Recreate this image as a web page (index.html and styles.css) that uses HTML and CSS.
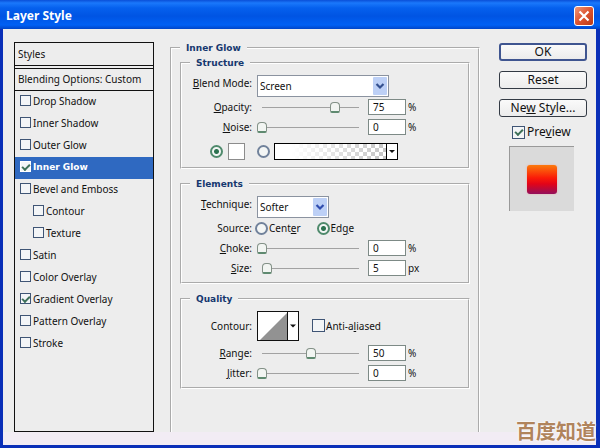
FILE: index.html
```html
<!DOCTYPE html>
<html lang="en">
<head>
<meta charset="utf-8">
<title>Layer Style</title>
<link rel="stylesheet" href="styles.css">
</head>
<body>
<form class="window">
  <header class="titlebar">
    <h1>Layer Style</h1>
    <button type="button" class="close" aria-label="Close">
      <svg viewBox="0 0 20 20" width="20" height="20"><path d="M5 5L15 15M15 5L5 15" stroke="#fff" stroke-width="2.400" fill="none"/></svg>
    </button>
  </header>

  <div class="content">
    <nav class="styles">
      <h2 class="head">Styles</h2>
      <h2 class="head options">Blending Options: Custom</h2>
      <label class="item"><input type="checkbox" class="check"><span>Drop Shadow</span></label>
      <label class="item"><input type="checkbox" class="check"><span>Inner Shadow</span></label>
      <label class="item"><input type="checkbox" class="check"><span>Outer Glow</span></label>
      <label class="item selected"><input type="checkbox" class="check" checked><span>Inner Glow</span></label>
      <label class="item"><input type="checkbox" class="check"><span>Bevel and Emboss</span></label>
      <label class="item sub"><input type="checkbox" class="check"><span>Contour</span></label>
      <label class="item sub"><input type="checkbox" class="check"><span>Texture</span></label>
      <label class="item"><input type="checkbox" class="check"><span>Satin</span></label>
      <label class="item"><input type="checkbox" class="check"><span>Color Overlay</span></label>
      <label class="item"><input type="checkbox" class="check" checked><span>Gradient Overlay</span></label>
      <label class="item"><input type="checkbox" class="check"><span>Pattern Overlay</span></label>
      <label class="item"><input type="checkbox" class="check"><span>Stroke</span></label>
    </nav>

    <fieldset class="panel">
      <legend>Inner Glow</legend>

      <fieldset class="group">
        <legend>Structure</legend>
        <div class="row top">
          <label class="name" for="mode"><u>B</u>lend Mode:</label>
          <div class="drop wide">
            <select id="mode"><option>Screen</option></select>
            <svg class="arrow" viewBox="0 0 14 18" width="14" height="18"><rect width="14" height="18" rx="1" fill="#bdd0f6"/><path d="M3.500 7L7 10.500L10.500 7" stroke="#34508f" stroke-width="2.200" fill="none"/></svg>
          </div>
        </div>
        <div class="row">
          <label class="name" for="opacity"><u>O</u>pacity:</label>
          <input type="range" id="opacity" class="slider" value="75">
          <input type="text" class="value" value="75" aria-label="Opacity value"><span>%</span>
        </div>
        <div class="row">
          <label class="name" for="noise"><u>N</u>oise:</label>
          <input type="range" id="noise" class="slider" value="0">
          <input type="text" class="value" value="0" aria-label="Noise value"><span>%</span>
        </div>
        <div class="paint">
          <input type="radio" class="radio" name="fill" aria-label="Color" checked>
          <button type="button" class="swatch" aria-label="Glow color"></button>
          <input type="radio" class="radio" name="fill" aria-label="Gradient">
          <button type="button" class="gradient" aria-label="Glow gradient">
            <span class="ramp"></span>
            <svg class="more" viewBox="0 0 10 15" width="10" height="15"><path d="M2 6H8L5 9Z" fill="#111"/></svg>
          </button>
        </div>
      </fieldset>

      <fieldset class="group">
        <legend>Elements</legend>
        <div class="row top">
          <label class="name" for="technique"><u>T</u>echnique:</label>
          <div class="drop">
            <select id="technique"><option>Softer</option></select>
            <svg class="arrow" viewBox="0 0 14 18" width="14" height="18"><rect width="14" height="18" rx="1" fill="#bdd0f6"/><path d="M3.500 7L7 10.500L10.500 7" stroke="#2f4cae" stroke-width="2.200" fill="none"/></svg>
          </div>
        </div>
        <div class="row">
          <span class="name">Source:</span>
          <div class="choices">
            <label><input type="radio" class="radio" name="source"><span>Cent<u>e</u>r</span></label>
            <label><input type="radio" class="radio" name="source" checked><span>Ed<u>g</u>e</span></label>
          </div>
        </div>
        <div class="row">
          <label class="name" for="choke"><u>C</u>hoke:</label>
          <input type="range" id="choke" class="slider" value="0">
          <input type="text" class="value" value="0" aria-label="Choke value"><span>%</span>
        </div>
        <div class="row">
          <label class="name" for="size"><u>S</u>ize:</label>
          <input type="range" id="size" class="slider" value="5">
          <input type="text" class="value" value="5" aria-label="Size value"><span>px</span>
        </div>
      </fieldset>

      <fieldset class="group">
        <legend>Quality</legend>
        <div class="row curve">
          <span class="name">Contour:</span>
          <button type="button" class="contour" aria-label="Contour">
            <svg viewBox="0 0 40 28" width="40" height="28"><path d="M0 0H40V28H0Z" fill="#fff"/><path d="M2 28L29 1V28Z" fill="#929292"/><path d="M29.500 0V28" stroke="#111"/><path d="M32 12.500H38L35 15.500Z" fill="#111"/></svg>
          </button>
          <label class="anti"><input type="checkbox" class="check large"><span>Anti-a<u>l</u>iased</span></label>
        </div>
        <div class="row">
          <label class="name" for="range"><u>R</u>ange:</label>
          <input type="range" id="range" class="slider" value="50">
          <input type="text" class="value" value="50" aria-label="Range value"><span>%</span>
        </div>
        <div class="row">
          <label class="name" for="jitter"><u>J</u>itter:</label>
          <input type="range" id="jitter" class="slider" value="0">
          <input type="text" class="value" value="0" aria-label="Jitter value"><span>%</span>
        </div>
      </fieldset>
    </fieldset>

    <aside class="actions">
      <button type="button" class="button default">OK</button>
      <button type="button" class="button">Reset</button>
      <button type="button" class="button">Ne<u>w</u> Style...</button>
      <label class="preview"><input type="checkbox" class="check large" checked><span>Pre<u>v</u>iew</span></label>
      <div class="sample"><div class="tile"></div></div>
    </aside>
  </div>
  <footer class="base"></footer>
  <div class="mark" lang="zh">百度知道</div>
</form>
</body>
</html>
```
FILE: styles.css
```css
* { box-sizing: border-box; }
body {
  margin: 0;
  font: 10px/16px "Noto Sans", sans-serif;
  color: #111;
}
h1, h2, fieldset { margin: 0; padding: 0; min-width: 0; }
button, input, select { margin: 0; padding: 0; font: inherit; color: inherit; }
u { text-underline-offset: 1px; }

.window {
  position: relative;
  display: flex;
  flex-direction: column;
  min-height: 100vh;
  background: #ededed;
  border: solid #0a2fb8;
  border-width: 0 4px 3px 3px;
}
.titlebar {
  display: flex;
  align-items: center;
  justify-content: space-between;
  height: 29px;
  margin: 0 -4px 0 -3px;
  padding: 2px 6px 0;
  background: linear-gradient(#0a4fd8, #1a78fb 3px, #0560ee 8px, #0054e3 16px, #0060f4 25px, #0045c8);
}
.titlebar h1 {
  font: bold 12px/20px "Noto Sans", sans-serif;
  color: #fff;
}
.close {
  display: flex;
  width: 20px;
  height: 20px;
  border: 1px solid #fff;
  border-radius: 3px;
  background: linear-gradient(135deg, #ee9878, #dd5330 50%, #b93a16);
  align-items: center;
  justify-content: center;
}
.content {
  flex: 1;
  display: flex;
  padding: 13px 9px 0 11px;
}
.base { height: 13px; background: #f2ecf4; }

/* Style list */
.styles {
  width: 140px;
  margin-right: 16px;
  border: 1px solid #111;
}
.head {
  height: 22px;
  padding-left: 3px;
  font: 10px/22px "Noto Sans", sans-serif;
}
.options {
  height: 26px;
  border: solid #111;
  border-width: 4px 0 1px;
  border-top-style: double;
  line-height: 20px;
}
.item {
  display: flex;
  align-items: center;
  gap: 2px;
  height: 22px;
  padding: 0 0 3px 5px;
}
.sub { padding-left: 18px; }
.selected {
  background: #2f69c1;
  color: #fff;
  font: bold 9px/16px "DejaVu Sans", sans-serif;
}

.check {
  appearance: none;
  flex: none;
  width: 11px;
  height: 11px;
  border: 1px solid #3f5575;
  background: #f3f5f7;
}
.large { width: 13px; height: 13px; }
.check:checked::before {
  content: "";
  display: block;
  width: 6px;
  height: 3px;
  margin: 2px auto;
  border: solid #3d7058;
  border-width: 0 0 2px 2px;
  transform: rotate(-45deg);
}
.selected .check { border-color: #fff; }

/* Settings */
legend {
  padding: 0 6px;
  font: bold 9px/12px "DejaVu Sans", sans-serif;
  color: #16386f;
}
.panel {
  flex: 1;
  padding: 3px 8px 0;
  border: 2px groove #fff;
  border-bottom: 0;
}
.group {
  margin-bottom: 9px;
  padding: 6px 0 4px;
  border: 2px groove #fff;
}
.group legend { margin-left: 8px; }
.row {
  display: flex;
  align-items: center;
  height: 20px;
}
.name {
  width: 70px;
  margin-right: 5px;
  text-align: right;
}
.top { height: 22px; align-items: flex-start; }
.drop {
  display: grid;
  width: 72px;
}
.wide { width: 132px; }
.drop select {
  grid-area: 1 / 1;
  appearance: none;
  height: 22px;
  padding-left: 2px;
  border: 1px solid #8b93a0;
  border-radius: 0;
  background: #fff;
}
.arrow {
  grid-area: 1 / 1;
  place-self: center end;
  margin-right: 2px;
  pointer-events: none;
}
.slider {
  appearance: none;
  width: 107px;
  height: 12px;
  margin-right: 4px;
  background: linear-gradient(#a2a2a2, #a2a2a2) center / 97px 1px no-repeat;
}
.slider::-webkit-slider-thumb {
  appearance: none;
  width: 10px;
  height: 11px;
  border: 1px solid #839187;
  border-bottom: 2px solid #5f8a70;
  border-radius: 4px 4px 2px 2px;
  background: #f2f5f2;
}
.value {
  width: 38px;
  height: 16px;
  margin-right: 2px;
  padding-left: 4px;
  border: 1px solid #7d8a86;
  background: #fff;
}
.radio {
  appearance: none;
  flex: none;
  width: 13px;
  height: 13px;
  border: 2px solid #71829b;
  border-radius: 50%;
  background: #f4f6f5;
}
.radio:checked {
  border-color: #4f8a6c;
  background: radial-gradient(circle, #2c7350 2px, #f4f6f5 3px);
}
.paint {
  display: flex;
  align-items: center;
  margin: 6px 0 3px;
  padding-left: 28px;
}
.swatch {
  width: 17px;
  height: 17px;
  margin: 0 12px 0 5px;
  border: 1px solid #8c8c8c;
  background: #fff;
}
.gradient {
  display: flex;
  width: 124px;
  height: 17px;
  margin-left: 4px;
  border: 1px solid #000;
  background: #fff;
}
.ramp {
  flex: 1;
  height: 15px;
  border-right: 1px solid #000;
  background:
    linear-gradient(90deg, #fff 15%, transparent),
    conic-gradient(#fff 25%, #c4c4c4 0 50%, #fff 0 75%, #c4c4c4 0) 0 0 / 8px 8px;
}
.choices { display: flex; gap: 18px; }
.choices label, .anti, .preview {
  display: flex;
  align-items: center;
}
.choices label, .anti { gap: 1px; }
.choices .radio { margin-left: -2px; }
.curve { height: 29px; margin-bottom: 3px; }
.contour {
  display: flex;
  width: 42px;
  height: 30px;
  margin-right: 13px;
  border: 1px solid #111;
}

/* Buttons and preview */
.actions {
  width: 88px;
  margin-left: 19px;
  padding-top: 1px;
}
.button {
  display: block;
  width: 100%;
  height: 18px;
  margin-bottom: 10px;
  border: 1px solid #333a44;
  border-radius: 3px;
  background: linear-gradient(#fafafa, #ececec);
  font-size: 12px;
  line-height: 16px;
}
.default { border: 2px solid #3f5590; line-height: 14px; }
.preview {
  gap: 2px;
  margin: -3px 0 6px 13px;
  font-size: 12px;
}
.sample {
  display: grid;
  place-items: center;
  width: 65px;
  height: 65px;
  margin-left: 10px;
  border: solid #999;
  border-width: 1px 0 0 1px;
  background: #dadada;
}
.tile {
  width: 30px;
  height: 29px;
  border-radius: 3px;
  background: linear-gradient(#fb7a0c, #fa1a08 45%, #e30418 65%, #92105c);
  box-shadow: 0 0 2px #f4a6a0;
}
.mark {
  position: absolute;
  right: 0;
  bottom: 2px;
  font: bold 20px/24px "Noto Sans CJK SC", sans-serif;
  color: #b0845c;
  text-shadow: 0 0 2px #fff, 0 0 2px #fff;
}
```
